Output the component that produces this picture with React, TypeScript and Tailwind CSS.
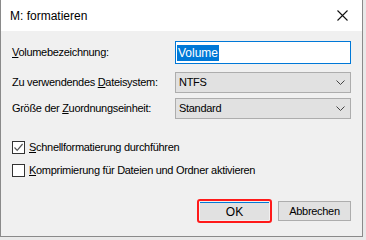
import React from "react";

function Chevron() {
  return (
    <svg width="9" height="5" viewBox="0 0 9 5" className="shrink-0">
      <path d="M0.5 0.5 L4.5 4.5 L8.5 0.5" fill="none" stroke="#444" strokeWidth="1" />
    </svg>
  );
}

function Select({ value }: { value: string }) {
  return (
    <div className="w-[176px] h-[21px] border border-[#adadad] bg-[#e1e1e1] flex items-center justify-between pl-[3px] pr-[5px]">
      <span>{value}</span>
      <Chevron />
    </div>
  );
}

function Check({ checked, children }: { checked?: boolean; children: React.ReactNode }) {
  return (
    <div className="flex items-center gap-[4px] h-[13px] whitespace-nowrap">
      <div className="w-[13px] h-[13px] border border-[#333] bg-white flex items-center justify-center shrink-0">
        {checked && (
          <svg width="11" height="11" viewBox="0 0 11 11">
            <path d="M1.5 5.5 L4.2 8.3 L9.6 2" fill="none" stroke="#555" strokeWidth="1.2" />
          </svg>
        )}
      </div>
      <span>{children}</span>
    </div>
  );
}

export default function App() {
  return (
    <div
      className="w-[366px] h-[240px] bg-[#e9e9e9] overflow-hidden text-[11px] tracking-[-0.3px] text-black leading-none"
      style={{ fontFamily: '"Liberation Sans", Arial, sans-serif' }}
    >
      <div className="w-[363px] h-[237px] border-x border-b border-[#8a8a8a] bg-[#f0f0f0] flex flex-col">
        {/* title bar */}
        <div className="h-[31px] bg-white flex items-center justify-between pl-[9px] pr-[14px] shrink-0">
          <span className="text-[12px] tracking-normal">M: formatieren</span>
          <svg width="11" height="11" viewBox="0 0 11 11">
            <path d="M0.5 0.5 L10.5 10.5 M10.5 0.5 L0.5 10.5" stroke="#111" strokeWidth="1.1" />
          </svg>
        </div>

        <div className="flex flex-col pl-[11px] pr-[11px] pt-[10px] whitespace-nowrap">
          <div className="flex items-center justify-between h-[23px]">
            <span>
              <span className="underline">V</span>olumebezeichnung:
            </span>
            <div className="w-[176px] h-[23px] border border-[#0078d7] bg-white flex items-center pl-[1px]">
              <span className="bg-[#0078d7] text-white px-[1px] h-[16px] flex items-center text-[12px] tracking-normal">Volume</span>
            </div>
          </div>

          <div className="flex items-center justify-between mt-[8px]">
            <span>
              Zu verwendendes <span className="underline">D</span>ateisystem:
            </span>
            <Select value="NTFS" />
          </div>

          <div className="flex items-center justify-between mt-[5px]">
            <span>
              Größe der <span className="underline">Z</span>uordnungseinheit:
            </span>
            <Select value="Standard" />
          </div>

          <div className="flex flex-col gap-[10px] mt-[22px]">
            <Check checked>
              <span className="underline">S</span>chnellformatierung durchführen
            </Check>
            <Check>
              <span className="underline">K</span>omprimierung für Dateien und Ordner aktivieren
            </Check>
          </div>

          <div className="flex justify-end items-center gap-[6px] mt-[22px]">
            <div className="w-[75px] h-[24px] border-[2px] border-[#ff1a1a] rounded-[3px] p-[1px]">
              <div className="w-full h-full bg-[#e1e1e1] border-t border-[#0078d7] flex items-center justify-center text-[12px] tracking-normal">
                OK
              </div>
            </div>
            <div className="w-[73px] h-[20px] bg-[#e1e1e1] border border-[#adadad] flex items-center justify-center">
              Abbrechen
            </div>
          </div>
        </div>
      </div>
    </div>
  );
}
